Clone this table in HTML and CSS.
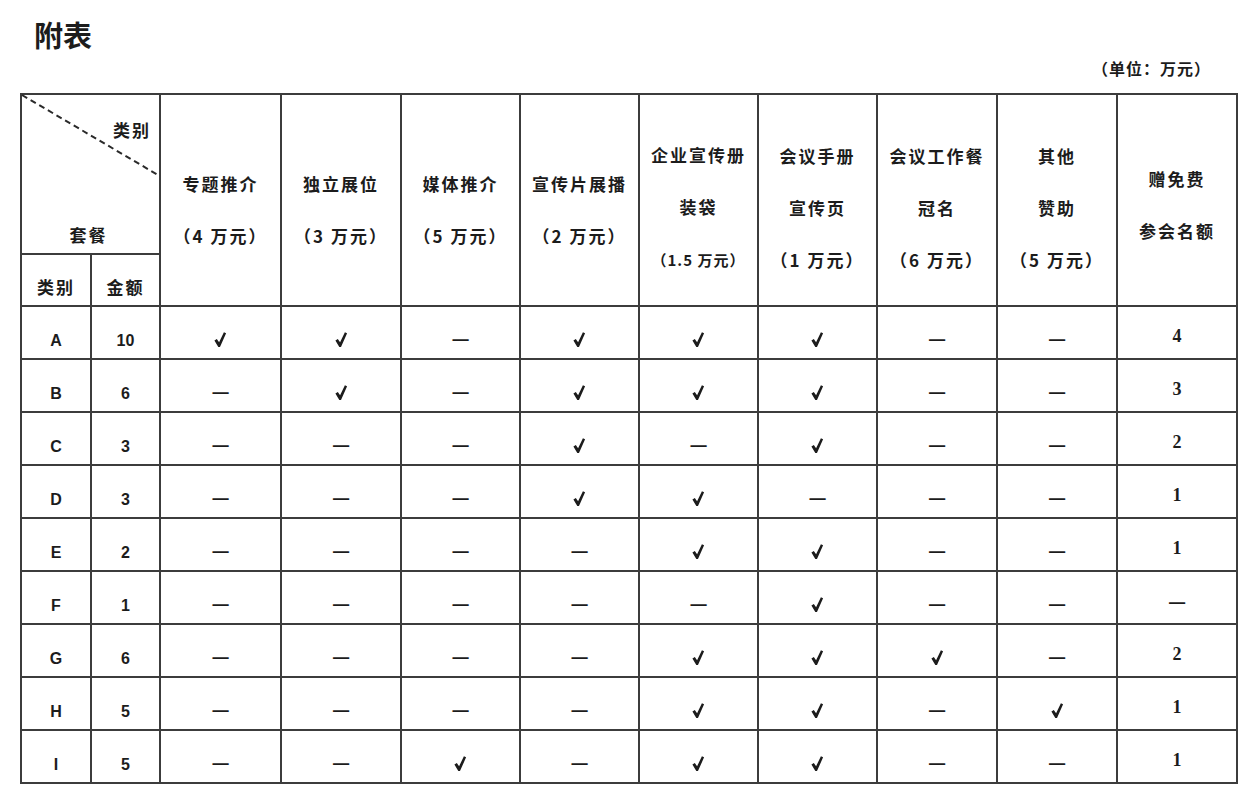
FILE: index.html
```html
<!DOCTYPE html>
<html lang="zh-CN">
<head>
<meta charset="utf-8">
<title>附表</title>
<link rel="stylesheet" href="styles.css">
</head>
<body>
<svg width="0" height="0" class="defs" aria-hidden="true">
  <symbol id="tick" viewBox="0 0 12.5 15.5">
    <path d="M0.4 8.4 L2.8 6.9 L5.1 10.2 L9.9 0.3 L12.1 1.3 L6 15.1 L4.3 15.1 Z"></path>
  </symbol>
</svg>
<div class="page">
  <h1 class="title">附表</h1>
  <div class="unit">（单位：万元）</div>
  <table class="grid">
    <colgroup>
      <col class="c-key"><col class="c-amt">
      <col class="c-a"><col class="c-b"><col class="c-c"><col class="c-c"><col class="c-c"><col class="c-c"><col class="c-b"><col class="c-b"><col class="c-b">
    </colgroup>
    <thead>
      <tr class="head-top">
        <th class="corner" colspan="2">
          <svg class="diag" viewBox="0 0 100 100" preserveAspectRatio="none" aria-hidden="true">
            <line x1="0" y1="0" x2="100" y2="51" vector-effect="non-scaling-stroke"></line>
          </svg>
          <div class="corner-in">
            <span class="corner-top">类别</span>
            <span class="corner-bot">套餐</span>
          </div>
        </th>
        <th rowspan="2" class="h2">专题推介<br>（4 万元）</th>
        <th rowspan="2" class="h2">独立展位<br>（3 万元）</th>
        <th rowspan="2" class="h2">媒体推介<br>（5 万元）</th>
        <th rowspan="2" class="h2">宣传片展播<br>（2 万元）</th>
        <th rowspan="2" class="h3">企业宣传册<br>装袋<br><span class="small">（1.5 万元）</span></th>
        <th rowspan="2" class="h3">会议手册<br>宣传页<br>（1 万元）</th>
        <th rowspan="2" class="h3">会议工作餐<br>冠名<br>（6 万元）</th>
        <th rowspan="2" class="h3">其他<br>赞助<br>（5 万元）</th>
        <th rowspan="2" class="hlast">赠免费<br>参会名额</th>
      </tr>
      <tr class="head-sub">
        <th class="sub">类别</th>
        <th class="sub">金额</th>
      </tr>
    </thead>
    <tbody>
      <tr><td class="key">A</td><td class="key">10</td><td class="ck"><svg class="tick" role="img" aria-label="√"><use href="#tick"></use></svg></td><td class="ck"><svg class="tick" role="img" aria-label="√"><use href="#tick"></use></svg></td><td class="ds">—</td><td class="ck"><svg class="tick" role="img" aria-label="√"><use href="#tick"></use></svg></td><td class="ck"><svg class="tick" role="img" aria-label="√"><use href="#tick"></use></svg></td><td class="ck"><svg class="tick" role="img" aria-label="√"><use href="#tick"></use></svg></td><td class="ds">—</td><td class="ds">—</td><td class="num">4</td></tr>
      <tr><td class="key">B</td><td class="key">6</td><td class="ds">—</td><td class="ck"><svg class="tick" role="img" aria-label="√"><use href="#tick"></use></svg></td><td class="ds">—</td><td class="ck"><svg class="tick" role="img" aria-label="√"><use href="#tick"></use></svg></td><td class="ck"><svg class="tick" role="img" aria-label="√"><use href="#tick"></use></svg></td><td class="ck"><svg class="tick" role="img" aria-label="√"><use href="#tick"></use></svg></td><td class="ds">—</td><td class="ds">—</td><td class="num">3</td></tr>
      <tr><td class="key">C</td><td class="key">3</td><td class="ds">—</td><td class="ds">—</td><td class="ds">—</td><td class="ck"><svg class="tick" role="img" aria-label="√"><use href="#tick"></use></svg></td><td class="ds">—</td><td class="ck"><svg class="tick" role="img" aria-label="√"><use href="#tick"></use></svg></td><td class="ds">—</td><td class="ds">—</td><td class="num">2</td></tr>
      <tr><td class="key">D</td><td class="key">3</td><td class="ds">—</td><td class="ds">—</td><td class="ds">—</td><td class="ck"><svg class="tick" role="img" aria-label="√"><use href="#tick"></use></svg></td><td class="ck"><svg class="tick" role="img" aria-label="√"><use href="#tick"></use></svg></td><td class="ds">—</td><td class="ds">—</td><td class="ds">—</td><td class="num">1</td></tr>
      <tr><td class="key">E</td><td class="key">2</td><td class="ds">—</td><td class="ds">—</td><td class="ds">—</td><td class="ds">—</td><td class="ck"><svg class="tick" role="img" aria-label="√"><use href="#tick"></use></svg></td><td class="ck"><svg class="tick" role="img" aria-label="√"><use href="#tick"></use></svg></td><td class="ds">—</td><td class="ds">—</td><td class="num">1</td></tr>
      <tr><td class="key">F</td><td class="key">1</td><td class="ds">—</td><td class="ds">—</td><td class="ds">—</td><td class="ds">—</td><td class="ds">—</td><td class="ck"><svg class="tick" role="img" aria-label="√"><use href="#tick"></use></svg></td><td class="ds">—</td><td class="ds">—</td><td class="num ds">—</td></tr>
      <tr><td class="key">G</td><td class="key">6</td><td class="ds">—</td><td class="ds">—</td><td class="ds">—</td><td class="ds">—</td><td class="ck"><svg class="tick" role="img" aria-label="√"><use href="#tick"></use></svg></td><td class="ck"><svg class="tick" role="img" aria-label="√"><use href="#tick"></use></svg></td><td class="ck"><svg class="tick" role="img" aria-label="√"><use href="#tick"></use></svg></td><td class="ds">—</td><td class="num">2</td></tr>
      <tr><td class="key">H</td><td class="key">5</td><td class="ds">—</td><td class="ds">—</td><td class="ds">—</td><td class="ds">—</td><td class="ck"><svg class="tick" role="img" aria-label="√"><use href="#tick"></use></svg></td><td class="ck"><svg class="tick" role="img" aria-label="√"><use href="#tick"></use></svg></td><td class="ds">—</td><td class="ck"><svg class="tick" role="img" aria-label="√"><use href="#tick"></use></svg></td><td class="num">1</td></tr>
      <tr><td class="key">I</td><td class="key">5</td><td class="ds">—</td><td class="ds">—</td><td class="ck"><svg class="tick" role="img" aria-label="√"><use href="#tick"></use></svg></td><td class="ds">—</td><td class="ck"><svg class="tick" role="img" aria-label="√"><use href="#tick"></use></svg></td><td class="ck"><svg class="tick" role="img" aria-label="√"><use href="#tick"></use></svg></td><td class="ds">—</td><td class="ds">—</td><td class="num">1</td></tr>
    </tbody>
  </table>
</div>
</body>
</html>
```

FILE: styles.css
```css
html, body {
  margin: 0;
  padding: 0;
  background: #ffffff;
}

body {
  font-family: "Noto Sans CJK SC", "Noto Sans", sans-serif;
  color: #1c1c1c;
}

.defs {
  position: absolute;
  width: 0;
  height: 0;
  overflow: hidden;
}

.page {
  padding-top: 16px;
}

.title {
  margin: 0 0 0 34px;
  font-size: 29px;
  line-height: 36px;
  font-weight: 700;
}

.unit {
  margin-top: 6px;
  padding-right: 46px;
  text-align: right;
  font-size: 16px;
  letter-spacing: 1px;
  line-height: 20px;
  font-weight: 700;
}

.grid {
  margin: 15px 0 0 20px;
  width: 1216px;
  border-collapse: collapse;
  table-layout: fixed;
}

.c-key { width: 70px; }
.c-amt { width: 69px; }
.c-a { width: 121px; }
.c-b { width: 120px; }
.c-c { width: 119px; }

.grid th,
.grid td {
  border: 2px solid #3c3c3c;
  padding: 0;
  text-align: center;
}

.head-top { height: 158px; }
.head-sub { height: 52px; }
.grid tbody tr { height: 53px; }

.grid th {
  font-size: 17px;
  font-weight: 700;
  letter-spacing: 2px;
  line-height: 52px;
  vertical-align: middle;
}

.grid th.h2 { padding-top: 19px; }
.grid th.h3 { padding-top: 15px; }
.grid th.hlast { padding-top: 10px; }

.small {
  font-size: 15px;
  letter-spacing: 1px;
}

.corner {
  position: relative;
  vertical-align: top;
}

.diag {
  position: absolute;
  left: 0;
  top: 0;
  width: 100%;
  height: 100%;
  overflow: visible;
}

.diag line {
  stroke: #2a2a2a;
  stroke-width: 2;
  stroke-dasharray: 6 4;
}

.corner-in {
  display: flex;
  flex-direction: column;
  justify-content: space-between;
  height: 158px;
  box-sizing: border-box;
  padding: 22px 0 5px;
  line-height: 26px;
}

.corner-top {
  align-self: flex-end;
  padding-right: 8px;
}

.corner-bot {
  align-self: center;
  padding-right: 4px;
}

.grid th.sub {
  line-height: 26px;
  padding-top: 14px;
}

.grid td {
  vertical-align: middle;
  line-height: 22px;
}

.key {
  padding-top: 17px !important;
  font-family: "Liberation Sans", "Noto Sans CJK SC", sans-serif;
  font-weight: 700;
  font-size: 16px;
}

.ck {
  padding-top: 10px !important;
}

.tick {
  display: inline-block;
  width: 12.5px;
  height: 15.5px;
  vertical-align: middle;
  fill: #1c1c1c;
}

.ds {
  padding-top: 10px !important;
  font-size: 20px;
  font-weight: 700;
}

.num {
  padding-top: 6px !important;
  font-family: "Liberation Serif", serif;
  font-size: 18px;
  font-weight: 700;
}

.num.ds {
  padding-top: 6px !important;
  font-family: "Noto Sans CJK SC", sans-serif;
  font-size: 20px;
}
```
